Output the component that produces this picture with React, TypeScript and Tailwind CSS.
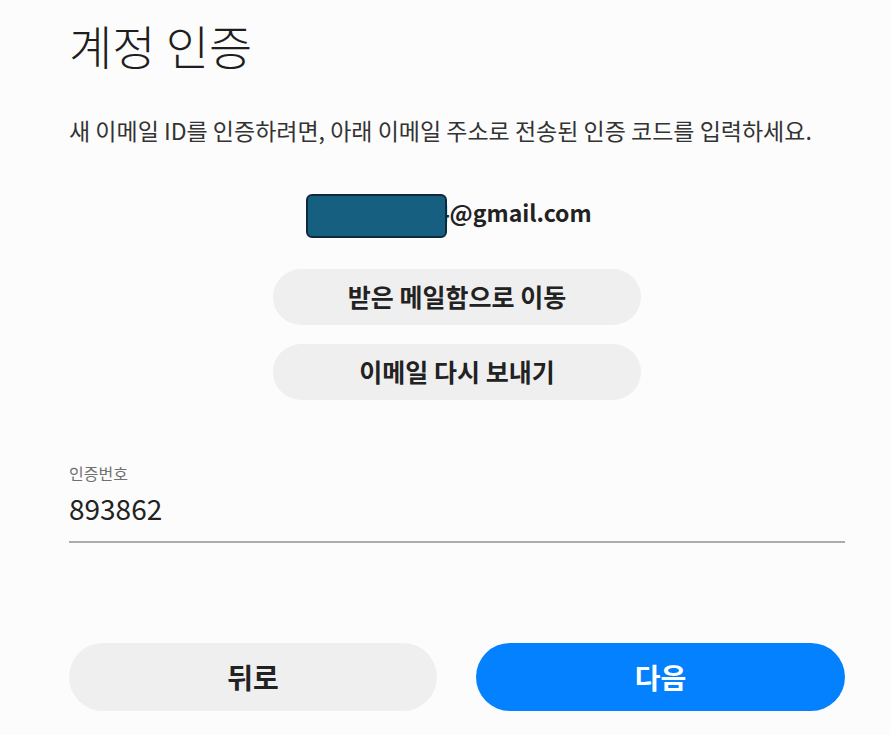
import { useState } from 'react';

export default function App() {
  const [code, setCode] = useState('893862');

  return (
    <div
      className="w-[890px] h-[735px] bg-[#fcfcfc] text-[#222] overflow-hidden"
      style={{ fontFamily: '"Noto Sans CJK KR", "Noto Sans", sans-serif' }}
    >
      <div className="flex flex-col px-[69px] w-[914px]">
        <h1 className="mt-[14px] text-[47px] leading-[62px] font-light text-[#1e1e1e]">계정 인증</h1>
        <p className="mt-[39px] text-[23px] leading-[30px] text-[#333] whitespace-nowrap">
          새 이메일 ID를 인증하려면, 아래 이메일 주소로 전송된 인증 코드를 입력하세요.
        </p>

        {/* email, first part masked */}
        <div className="mt-[52px] flex">
          <div className="relative ml-[237px] flex items-center">
            <span className="text-[23px] leading-[30px] font-bold text-[#222] pl-[130px]">4@gmail.com</span>
            <div className="absolute left-0 top-[-3px] w-[141px] h-[44px] rounded-[6px] bg-[#175f80] border-2 border-[#0c2a3b]" />
          </div>
        </div>

        <div className="mt-[42px] flex flex-col items-center gap-[19px] w-[776px]">
          <button className="w-[368px] h-[56px] rounded-full bg-[#efefef] text-[25px] font-bold text-[#222]">
            받은 메일함으로 이동
          </button>
          <button className="w-[368px] h-[56px] rounded-full bg-[#efefef] text-[25px] font-bold text-[#222]">
            이메일 다시 보내기
          </button>
        </div>

        <div className="mt-[63px] w-[776px] flex flex-col">
          <label className="text-[16px] leading-[20px] text-[#707070]">인증번호</label>
          <input
            value={code}
            onChange={(e) => setCode(e.target.value)}
            className="mt-[5px] h-[55px] pb-[13px] bg-transparent text-[28px] text-[#222] outline-none border-b-2 border-[#acacac]"
          />
        </div>

        <div className="mt-[100px] w-[776px] flex gap-[39px]">
          <button className="w-[368px] h-[68px] rounded-full bg-[#efefef] text-[28px] font-semibold text-[#222]">
            뒤로
          </button>
          <button className="w-[369px] h-[68px] rounded-full bg-[#0381fe] text-[28px] font-semibold text-white">
            다음
          </button>
        </div>
      </div>
    </div>
  );
}
